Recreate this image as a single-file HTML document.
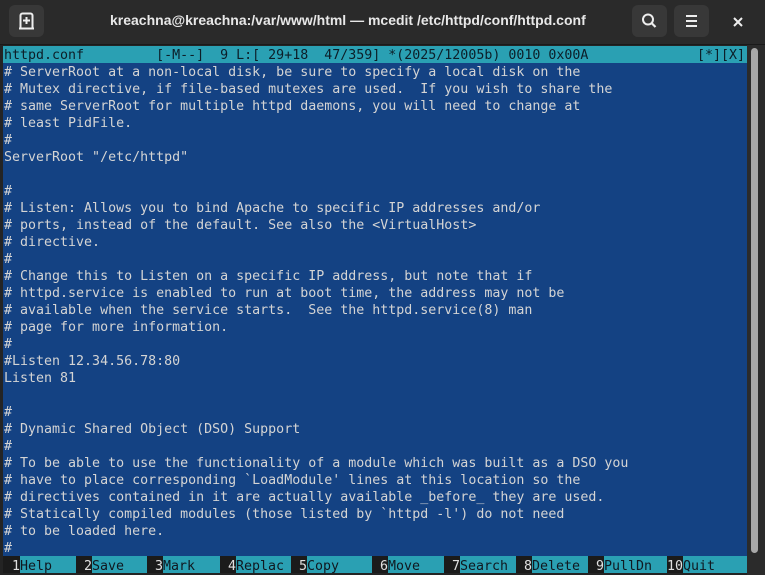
<!DOCTYPE html>
<html><head><meta charset="utf-8"><style>
*{margin:0;padding:0;box-sizing:border-box}
html,body{width:765px;height:575px;overflow:hidden;background:#242424}
.tb{position:absolute;left:0;top:0;width:765px;height:45px;background:#2a2a2a;border-bottom:1px solid #1a1a1a}
.btn{position:absolute;top:5px;width:35px;height:32px;background:#383838;border-radius:6px}
.title{position:absolute;left:110px;top:12px;font:bold 14px "Liberation Sans",sans-serif;color:#e8e8e8;white-space:nowrap}
.term{position:absolute;left:3px;top:46px;width:744px;height:527px;background:#144283}
.row{position:absolute;left:4px;height:17px;padding-top:3px;font:13.3px "DejaVu Sans Mono",monospace;color:#d4d4d4;white-space:pre;line-height:14px}
.status{position:absolute;left:3px;top:46px;width:744px;height:17px;background:#2aa0b3}
.sb{position:absolute;left:747px;top:45px;width:18px;height:530px;background:#2b2b2b}
.th{position:absolute;left:751px;top:48px;width:7px;height:505px;background:#a8a8a8;border-radius:4px}
.fk{position:absolute;top:556px;height:17px;font:13.3px "DejaVu Sans Mono",monospace;white-space:pre}
.n,.l{position:absolute;top:0;height:17px;line-height:17px;padding-top:2px}
.n{background:#1b1b1b;color:#e0e0e0;width:16px;text-align:right}
.l{background:#2aa0b3;color:#101820}
</style></head><body>
<div class="tb">
<div class="btn" style="left:9px"><svg width="35" height="32" viewBox="0 0 35 32"><path d="M11.5 23.5V10.5a2 2 0 0 1 2-2h8a2 2 0 0 1 2 2v13z" fill="none" stroke="#eee" stroke-width="2"/><path d="M17.5 12v7M14 15.5h7" stroke="#eee" stroke-width="2"/><path d="M10 23.5h15" stroke="#eee" stroke-width="2"/></svg></div>
<div class="title">kreachna@kreachna:/var/www/html — mcedit /etc/httpd/conf/httpd.conf</div>
<div class="btn" style="left:632px"><svg width="35" height="32" viewBox="0 0 35 32"><circle cx="16" cy="14.5" r="5" fill="none" stroke="#eee" stroke-width="2"/><path d="M19.5 18l4 4" stroke="#eee" stroke-width="2.2"/></svg></div>
<div class="btn" style="left:674px"><svg width="35" height="32" viewBox="0 0 35 32"><path d="M12 11h11M12 16h11M12 21h11" stroke="#eee" stroke-width="2"/></svg></div>
<svg style="position:absolute;left:730px;top:14px" width="16" height="16" viewBox="0 0 16 16"><path d="M4 4l8 8M12 4l-8 8" stroke="#eee" stroke-width="2"/></svg>
</div>
<div class="term"></div>
<div class="status"></div>
<div class="row" style="top:46px;color:#0c1e28">httpd.conf         [-M--]  9 L:[ 29+18  47/359] *(2025/12005b) 0010 0x00A</div>
<div class="row" style="top:46px;left:697px;color:#0c1e28">[*][X]</div>
<div class="row" style="top:63px"># ServerRoot at a non-local disk, be sure to specify a local disk on the</div>
<div class="row" style="top:80px"># Mutex directive, if file-based mutexes are used.  If you wish to share the</div>
<div class="row" style="top:97px"># same ServerRoot for multiple httpd daemons, you will need to change at</div>
<div class="row" style="top:114px"># least PidFile.</div>
<div class="row" style="top:131px">#</div>
<div class="row" style="top:148px">ServerRoot "/etc/httpd"</div>
<div class="row" style="top:182px">#</div>
<div class="row" style="top:199px"># Listen: Allows you to bind Apache to specific IP addresses and/or</div>
<div class="row" style="top:216px"># ports, instead of the default. See also the &lt;VirtualHost&gt;</div>
<div class="row" style="top:233px"># directive.</div>
<div class="row" style="top:250px">#</div>
<div class="row" style="top:267px"># Change this to Listen on a specific IP address, but note that if</div>
<div class="row" style="top:284px"># httpd.service is enabled to run at boot time, the address may not be</div>
<div class="row" style="top:301px"># available when the service starts.  See the httpd.service(8) man</div>
<div class="row" style="top:318px"># page for more information.</div>
<div class="row" style="top:335px">#</div>
<div class="row" style="top:352px">#Listen 12.34.56.78:80</div>
<div class="row" style="top:369px">Listen 81</div>
<div class="row" style="top:403px">#</div>
<div class="row" style="top:420px"># Dynamic Shared Object (DSO) Support</div>
<div class="row" style="top:437px">#</div>
<div class="row" style="top:454px"># To be able to use the functionality of a module which was built as a DSO you</div>
<div class="row" style="top:471px"># have to place corresponding `LoadModule' lines at this location so the</div>
<div class="row" style="top:488px"># directives contained in it are actually available _before_ they are used.</div>
<div class="row" style="top:505px"># Statically compiled modules (those listed by `httpd -l') do not need</div>
<div class="row" style="top:522px"># to be loaded here.</div>
<div class="row" style="top:539px">#</div>
<div class="fk" style="left:3px;width:744px;background:#1b1b1b">
<span class="n" style="left:1px">1</span><span class="l" style="left:17px;width:56px">Help</span>
<span class="n" style="left:73px">2</span><span class="l" style="left:89px;width:55px">Save</span>
<span class="n" style="left:144px">3</span><span class="l" style="left:160px;width:57px">Mark</span>
<span class="n" style="left:217px">4</span><span class="l" style="left:233px;width:55px">Replac</span>
<span class="n" style="left:288px">5</span><span class="l" style="left:304px;width:65px">Copy</span>
<span class="n" style="left:369px">6</span><span class="l" style="left:385px;width:56px">Move</span>
<span class="n" style="left:441px">7</span><span class="l" style="left:457px;width:56px">Search</span>
<span class="n" style="left:513px">8</span><span class="l" style="left:529px;width:56px">Delete</span>
<span class="n" style="left:585px">9</span><span class="l" style="left:601px;width:63px">PullDn</span>
<span class="n" style="left:664px">10</span><span class="l" style="left:680px;width:64px">Quit</span>
</div>
<div class="sb"></div><div class="th"></div>
</body></html>
